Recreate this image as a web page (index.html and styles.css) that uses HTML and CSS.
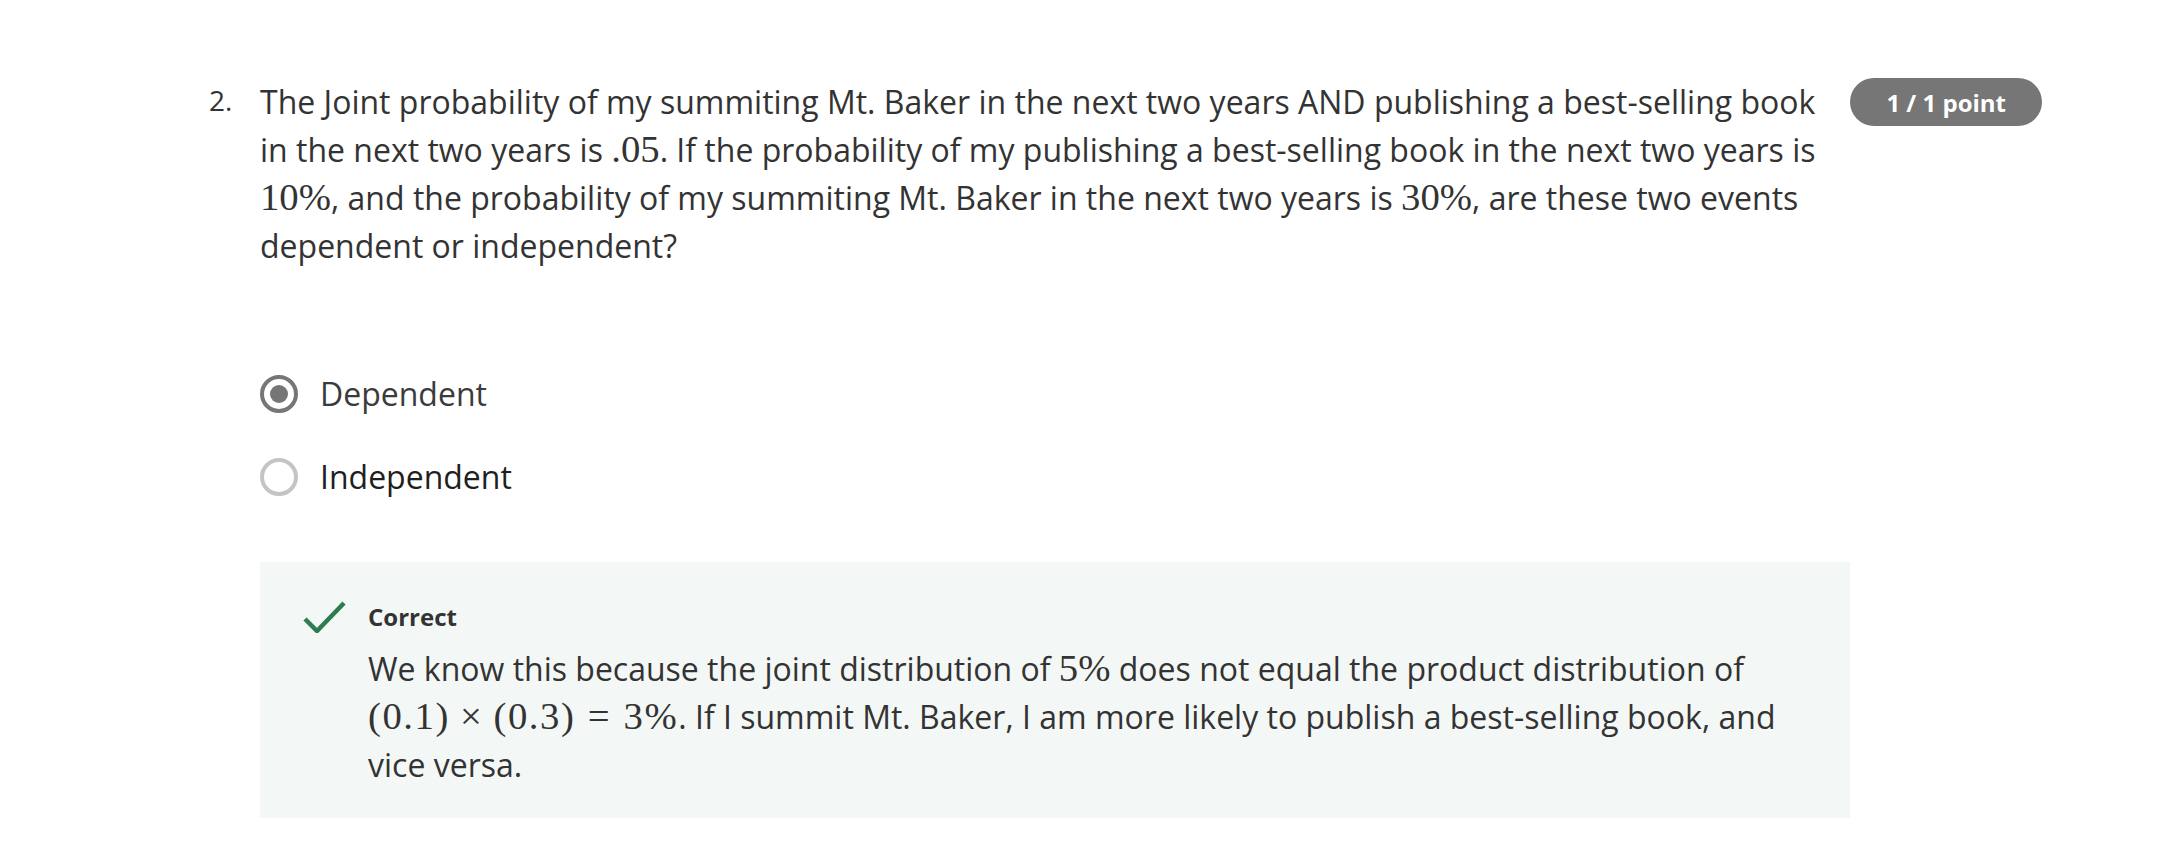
FILE: index.html
```html
<!DOCTYPE html>
<html lang="en">
<head>
<meta charset="utf-8">
<title>Question 2</title>
<link rel="stylesheet" href="styles.css">
</head>
<body>
<div class="page">
  <div class="question">
    <div class="qnum">2.</div>
    <div class="qbody">
      <div class="prompt">The Joint probability of my summiting Mt. Baker in the next two years AND publishing a best-selling book in the next two years is <span class="m">.05</span>. If the probability of my publishing a best-selling book in the next two years is <span class="m">10%</span>, and the probability of my summiting Mt. Baker in the next two years is <span class="m">30%</span>, are these two events dependent or independent?</div>
      <div class="options">
        <div class="option selected">
          <span class="radio"><span class="dot"></span></span>
          <span class="label">Dependent</span>
        </div>
        <div class="option">
          <span class="radio"></span>
          <span class="label dark">Independent</span>
        </div>
      </div>
      <div class="feedback">
        <svg class="check" width="43" height="32" viewBox="0 0 43 32" aria-hidden="true">
          <path d="M2 18 L14 30 L41 2" fill="none" stroke="#2e7d52" stroke-width="4.5" stroke-linecap="butt" stroke-linejoin="miter"/>
        </svg>
        <div class="fb-text">
          <div class="fb-title">Correct</div>
          <div class="fb-body">We know this because the joint distribution of <span class="m">5%</span> does not equal the product distribution of <span class="m wide">(0.1)<span class="op">×</span>(0.3)<span class="rel">=</span>3%</span>. If I summit Mt. Baker, I am more likely to publish a best-selling book, and vice versa.</div>
        </div>
      </div>
    </div>
    <div class="badge">1 / 1 point</div>
  </div>
</div>
</body>
</html>
```

FILE: styles.css
```css
html, body {
  margin: 0;
  padding: 0;
  background: #ffffff;
}

body {
  font-family: "Open Sans", "Noto Sans", sans-serif;
  color: #333333;
}

.page {
  padding: 78px 118px 0 209px;
}

.question {
  display: flex;
  align-items: flex-start;
}

.qnum {
  width: 51px;
  flex: none;
  font-size: 28px;
  line-height: 44px;
  color: #333333;
}

.qbody {
  flex: 1;
  min-width: 0;
}

.prompt {
  font-size: 32px;
  line-height: 48px;
  padding-right: 24px;
}

.m {
  font-family: "Liberation Serif", "DejaVu Serif", serif;
  font-size: 1.21em;
  line-height: 1;
}

.m.wide {
  letter-spacing: 0.04em;
}

.op {
  margin: 0 0.26em;
}

.rel {
  margin: 0 0.32em;
}

.options {
  margin-top: 100px;
  display: flex;
  flex-direction: column;
  gap: 35px;
}

.option {
  display: flex;
  align-items: center;
  height: 48px;
  gap: 22px;
}

.radio {
  width: 38px;
  height: 38px;
  box-sizing: border-box;
  border: 4px solid #c4c4c4;
  border-radius: 50%;
  display: flex;
  align-items: center;
  justify-content: center;
  flex: none;
}

.selected .radio {
  border-color: #767676;
}

.dot {
  width: 18px;
  height: 18px;
  border-radius: 50%;
  background: #767676;
}

.label {
  font-size: 32px;
  line-height: 48px;
  color: #3b3b3b;
}

.label.dark {
  color: #1f1f1f;
}

.feedback {
  margin-top: 61px;
  background: #f3f8f6;
  display: flex;
  align-items: flex-start;
  gap: 22px;
  padding: 37px 60px 29px 43px;
}

.check {
  flex: none;
  margin-top: 2px;
}

.fb-text {
  flex: 1;
}

.fb-title {
  font-size: 24px;
  line-height: 36px;
  font-weight: 700;
  color: #333333;
}

.fb-body {
  margin-top: 10px;
  font-size: 32px;
  line-height: 48px;
  color: #333333;
}

.badge {
  flex: none;
  margin-top: 0;
  height: 48px;
  padding: 0 36px;
  border-radius: 24px;
  background: #767676;
  color: #ffffff;
  font-size: 24px;
  font-weight: 700;
  display: flex;
  align-items: center;
  white-space: nowrap;
}
```
